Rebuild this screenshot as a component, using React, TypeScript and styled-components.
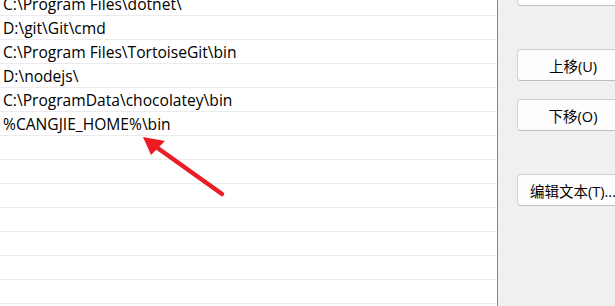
import styled, { createGlobalStyle } from "styled-components";

const GlobalStyle = createGlobalStyle`
	html, body {
		margin: 0;
		padding: 0;
		width: 615px;
		height: 306px;
		overflow: hidden;
		background: #f0f0f0;
	}
	body {
		font-family: "Open Sans", "Noto Sans CJK SC", sans-serif;
		color: #000;
	}
`;

const paths = [
	"C:\\Program Files\\dotnet\\",
	"D:\\git\\Git\\cmd",
	"C:\\Program Files\\TortoiseGit\\bin",
	"D:\\nodejs\\",
	"C:\\ProgramData\\chocolatey\\bin",
	"%CANGJIE_HOME%\\bin",
	"",
	"",
	"",
	"",
	"",
	"",
	"",
	"",
];

const App = () => {
	return (
		<>
			<GlobalStyle />
			<Window>
				<ListBox>
					<ListScroll>
						{paths.map((p, i) => (
							<Row key={i}>{p}</Row>
						))}
					</ListScroll>
					<Arrow width="100" height="80" viewBox="0 0 100 80">
						<line
							x1="84"
							y1="64"
							x2="14"
							y2="14"
							stroke="#ec1c24"
							strokeWidth="4.5"
							strokeLinecap="round"
						/>
						<polygon points="5,7 27,11 13,25" fill="#ec1c24" />
					</Arrow>
				</ListBox>
				<ButtonColumn>
					<Button>删除(D)</Button>
					<Button $gap={43}>上移(U)</Button>
					<Button $gap={18}>下移(O)</Button>
					<Button $gap={43}>编辑文本(T)...</Button>
				</ButtonColumn>
			</Window>
		</>
	);
};

export default App;

const Window = styled.div`
	display: flex;
	width: 615px;
	height: 306px;
	overflow: hidden;
`;

const ListBox = styled.div`
	position: relative;
	width: 497px;
	height: 306px;
	flex-shrink: 0;
	background: #ffffff;
	border-right: 1px solid #8a8a8a;
	overflow: hidden;
`;

const ListScroll = styled.div`
	margin-top: -8px;
`;

const Row = styled.div`
	box-sizing: border-box;
	height: 24px;
	padding: 2px 0 0 3px;
	font-size: 15.6px;
	line-height: 21px;
	border-bottom: 1px solid #ebebeb;
	white-space: nowrap;
`;

const Arrow = styled.svg`
	position: absolute;
	left: 138px;
	top: 130px;
`;

const ButtonColumn = styled.div`
	display: flex;
	flex-direction: column;
	margin-top: -26px;
	padding-left: 19px;
`;

const Button = styled.div<{ $gap?: number }>`
	box-sizing: border-box;
	width: 112px;
	height: 32px;
	margin-top: ${(p) => p.$gap ?? 0}px;
	padding-top: 1px;
	display: flex;
	align-items: center;
	justify-content: center;
	font-size: 14.5px;
	background: #fdfdfd;
	border: 1px solid #cfcfcf;
	border-bottom-color: #bdbdbd;
	border-radius: 4px;
	white-space: nowrap;
	flex-shrink: 0;
`;
